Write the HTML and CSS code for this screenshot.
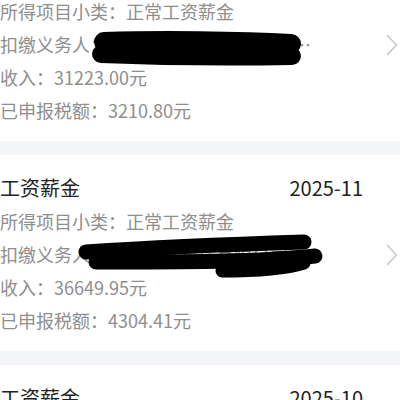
FILE: index.html
```html
<!DOCTYPE html>
<html lang="zh-CN">
<head>
<meta charset="utf-8">
<title>收入纳税明细</title>
<link rel="stylesheet" href="styles.css">
</head>
<body>
<div class="list">
  <div class="card">
    <div class="content">
      <div class="head"><span class="title">工资薪金</span><span class="date">2025-12</span></div>
      <div class="row">所得项目小类：正常工资薪金</div>
      <div class="row">扣缴义务人：<span class="name">某某某某科技有限公司某某</span>…</div>
      <div class="row">收入：31223.00元</div>
      <div class="row">已申报税额：3210.80元</div>
    </div>
    <svg class="chev" viewBox="0 0 12 22" width="12" height="22"><polyline points="1.5,1.5 10.5,11 1.5,20.5" fill="none" stroke="#c9c9c9" stroke-width="1.6" stroke-linecap="round" stroke-linejoin="round"/></svg>
  </div>
  <div class="gap"></div>
  <div class="card">
    <div class="content">
      <div class="head"><span class="title">工资薪金</span><span class="date">2025-11</span></div>
      <div class="row">所得项目小类：正常工资薪金</div>
      <div class="row">扣缴义务人：<span class="name">某某某某科技有限公司某某</span></div>
      <div class="row">收入：36649.95元</div>
      <div class="row">已申报税额：4304.41元</div>
    </div>
    <svg class="chev" viewBox="0 0 12 22" width="12" height="22"><polyline points="1.5,1.5 10.5,11 1.5,20.5" fill="none" stroke="#c9c9c9" stroke-width="1.6" stroke-linecap="round" stroke-linejoin="round"/></svg>
  </div>
  <div class="gap"></div>
  <div class="card">
    <div class="content">
      <div class="head"><span class="title">工资薪金</span><span class="date">2025-10</span></div>
      <div class="row">所得项目小类：正常工资薪金</div>
      <div class="row">扣缴义务人：<span class="name">某某某某科技有限公司某某</span></div>
      <div class="row">收入：31223.00元</div>
      <div class="row">已申报税额：3210.80元</div>
    </div>
    <svg class="chev" viewBox="0 0 12 22" width="12" height="22"><polyline points="1.5,1.5 10.5,11 1.5,20.5" fill="none" stroke="#c9c9c9" stroke-width="1.6" stroke-linecap="round" stroke-linejoin="round"/></svg>
  </div>
</div>
<svg class="redact" viewBox="0 0 400 400" width="400" height="400">
  <g fill="none" stroke="#000" stroke-linecap="round" stroke-linejoin="round">
    <path d="M104 42 C160 40, 240 41, 291 44" stroke-width="20"/>
    <path d="M101 54 C150 56, 230 57, 292 56" stroke-width="18"/>
    <path d="M86 252 C160 247, 240 244, 304 242" stroke-width="15"/>
    <path d="M96 262 C180 262, 260 262, 315 256" stroke-width="15"/>
    <path d="M222 271 C258 271, 288 268, 304 263" stroke-width="13"/>
  </g>
</svg>
</body>
</html>
```
FILE: styles.css
```css
html, body {
  margin: 0;
  padding: 0;
  background: #ffffff;
  width: 400px;
  height: 400px;
  overflow: hidden;
}
body {
  position: relative;
  font-family: "Noto Sans CJK SC", "Noto Sans", sans-serif;
}
.list {
  margin-top: -55px;
  display: flex;
  flex-direction: column;
}
.card {
  display: flex;
  align-items: center;
  padding: 17px 2px 14px 0;
  background: #ffffff;
}
.content {
  flex: 1;
  display: flex;
  flex-direction: column;
  padding-right: 23px;
}
.head {
  display: flex;
  justify-content: space-between;
  align-items: center;
  height: 30px;
  margin-bottom: 3px;
}
.title {
  font-size: 20px;
  color: #222222;
}
.date {
  font-size: 20px;
  color: #222222;
}
.row {
  height: 33px;
  line-height: 33px;
  font-size: 18px;
  color: #8e8e8e;
  white-space: nowrap;
  overflow: hidden;
}
.name {
  display: inline-block;
  width: 185px;
  overflow: hidden;
  vertical-align: top;
}
.chev {
  flex: none;
  display: block;
}
.gap {
  height: 14px;
  background: #f4f5f9;
}
.redact {
  position: absolute;
  left: 0;
  top: 0;
}
```
